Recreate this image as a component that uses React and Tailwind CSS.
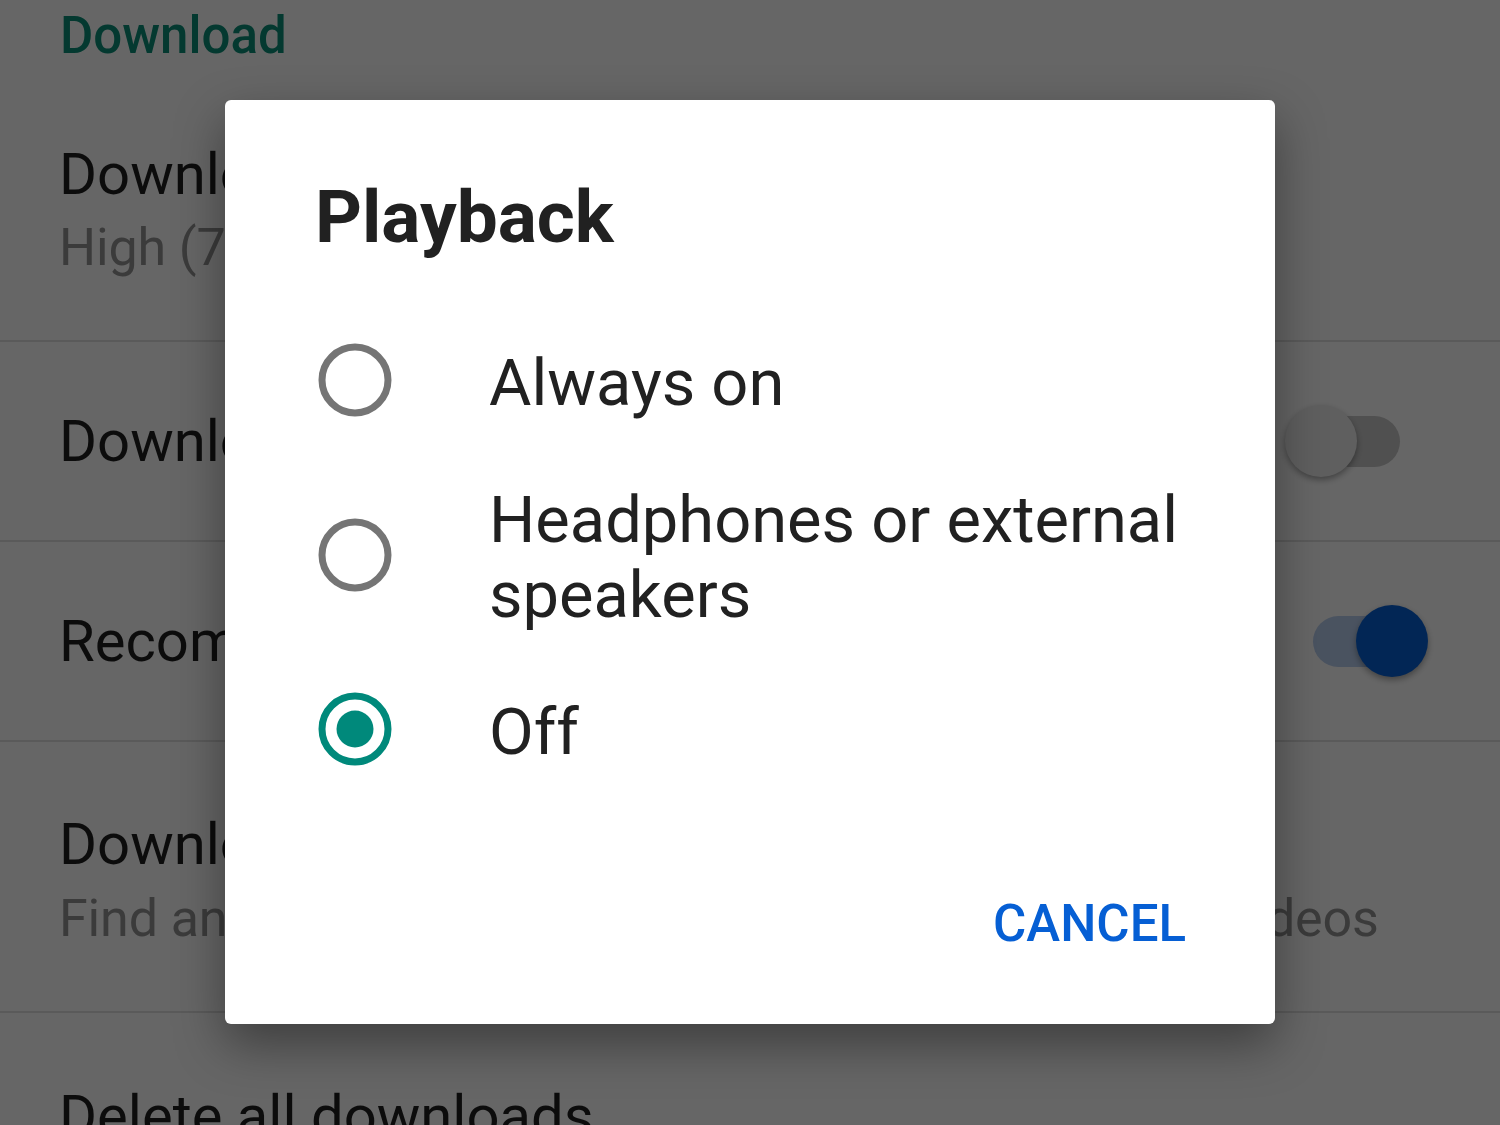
import React from 'react';

const rows = [
  { title: 'Download quality', sub: 'High (720p)', h: 'h-[204px]', pad: 'pt-0', top: true },
  { title: 'Download over Wi-Fi only', toggle: 'off', h: 'h-[200px]' },
  { title: 'Recommended downloads', toggle: 'on', h: 'h-[200px]' },
  { title: 'Downloads', sub: 'Find and play your downloaded and recommended videos', h: 'h-[271px]', pad: 'pt-[66px]', top: true },
];

const Toggle = ({ on }) => (
  <div className={`relative w-[87px] h-[51px] rounded-full ${on ? 'bg-[#b9cff0]' : 'bg-[#c8c8c8]'}`}>
    <div
      className={`absolute top-[-11px] w-[72px] h-[72px] rounded-full shadow-[0_3px_6px_rgba(0,0,0,0.35)] ${
        on ? 'left-[43px] bg-[#065fd4]' : 'left-[-28px] bg-[#eeeeee]'
      }`}
    />
  </div>
);

const Radio = ({ checked }) => (
  <svg width="80" height="80" viewBox="0 0 80 80" className="shrink-0">
    <circle cx="40" cy="40" r="33" fill="none" stroke={checked ? '#00897b' : '#757575'} strokeWidth="7" />
    {checked && <circle cx="40" cy="40" r="18.5" fill="#00897b" />}
  </svg>
);

const options = [
  { label: 'Always on', checked: false },
  { label: 'Headphones or external speakers', checked: false },
  { label: 'Off', checked: true },
];

export default function App() {
  return (
    <div className="relative w-[1500px] h-[1125px] overflow-hidden bg-white font-['Roboto',sans-serif]">
      {/* settings list underneath */}
      <div className="flex flex-col">
        <div className="h-[138px] pl-[60px] pt-[6px]">
          <div className="text-[51px] leading-[60px] font-medium text-[#0b8f78]">Download</div>
        </div>
        {rows.map((r, i) => (
          <div
            key={i}
            className={`${r.h} border-b-2 border-[#e0e0e0] pl-[59px] pr-[100px] flex ${
              r.top ? `flex-col ${r.pad}` : 'items-center justify-between'
            }`}
          >
            <div className="text-[58px] leading-[72px] text-[#1e1e1e] whitespace-nowrap">{r.title}</div>
            {r.sub && (
              <div className={`text-[52px] leading-[72px] tracking-[-0.14px] text-[#959595] whitespace-nowrap ${i === 3 ? 'mt-[3px]' : 'mt-[2px]'}`}>
                {r.sub}
              </div>
            )}
            {r.toggle && <Toggle on={r.toggle === 'on'} />}
          </div>
        ))}
        <div className="pl-[59px] pt-[67px]">
          <div className="text-[58px] leading-[72px] text-[#1e1e1e] whitespace-nowrap">Delete all downloads</div>
        </div>
      </div>

      {/* scrim */}
      <div className="absolute inset-0 bg-black/60" />

      {/* dialog */}
      <div className="absolute left-[225px] top-[100px] w-[1050px] h-[924px] bg-white rounded-[6px] shadow-[0_20px_50px_rgba(0,0,0,0.4)] flex flex-col pl-[90px] pr-[89px] pt-[80px]">
        <div className="text-[73px] leading-[74px] font-bold text-[#212121]">Playback</div>
        <div className="flex flex-col gap-[56px] mt-[86px]">
          {options.map((o) => (
            <div key={o.label} className="flex items-center">
              <div className="w-[80px] flex items-center mb-[7px]">
                <Radio checked={o.checked} />
              </div>
              <div className="ml-[94px] w-[720px] text-[65px] leading-[75px] text-[#212121]">{o.label}</div>
            </div>
          ))}
        </div>
        <div className="flex-1" />
        <div className="flex justify-end pb-[70px]">
          <button className="text-[51px] leading-[60px] font-medium text-[#065fd4]">CANCEL</button>
        </div>
      </div>
    </div>
  );
}
